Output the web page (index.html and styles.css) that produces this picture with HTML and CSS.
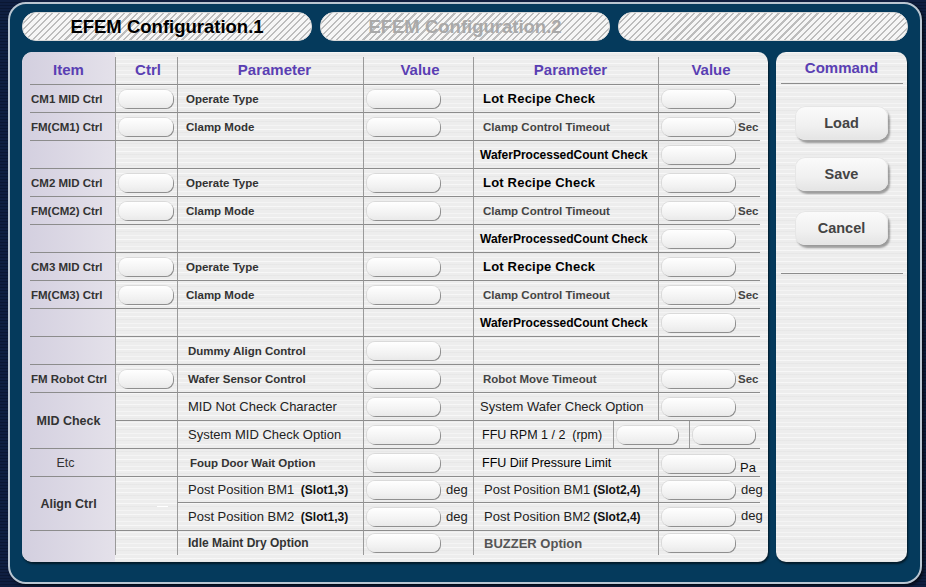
FILE: index.html
```html
<!DOCTYPE html>
<html>
<head>
<meta charset="utf-8">
<title>EFEM Configuration</title>
<link rel="stylesheet" href="styles.css">
</head>
<body>
<div class="frame">
  <div class="tabs">
    <div class="tab active">EFEM Configuration.1</div>
    <div class="tab dim">EFEM Configuration.2</div>
    <div class="tab"></div>
  </div>
  <div class="main">
    <div class="panel tbl">
      <div class="grid">
        <div class="h it ctr">Item</div><div class="h ct">Ctrl</div><div class="h pa">Parameter</div><div class="h va">Value</div><div class="h pb">Parameter</div><div class="h vb">Value</div>

        <div class="it">CM1 MID Ctrl</div><div class="ct"><span class="in s"></span></div><div class="pa b">Operate Type</div><div class="va"><span class="in"></span></div><div class="pb lrc">Lot Recipe Check</div><div class="vb"><span class="in"></span></div>
        <div class="it">FM(CM1) Ctrl</div><div class="ct"><span class="in s"></span></div><div class="pa b">Clamp Mode</div><div class="va"><span class="in"></span></div><div class="pb b g">Clamp Control Timeout</div><div class="vb"><span class="in"></span><span class="unit">Sec</span></div>
        <div class="it"></div><div class="ct"></div><div class="pa"></div><div class="va"></div><div class="pb wpc">WaferProcessedCount Check</div><div class="vb"><span class="in"></span></div>

        <div class="it">CM2 MID Ctrl</div><div class="ct"><span class="in s"></span></div><div class="pa b">Operate Type</div><div class="va"><span class="in"></span></div><div class="pb lrc">Lot Recipe Check</div><div class="vb"><span class="in"></span></div>
        <div class="it">FM(CM2) Ctrl</div><div class="ct"><span class="in s"></span></div><div class="pa b">Clamp Mode</div><div class="va"><span class="in"></span></div><div class="pb b g">Clamp Control Timeout</div><div class="vb"><span class="in"></span><span class="unit">Sec</span></div>
        <div class="it"></div><div class="ct"></div><div class="pa"></div><div class="va"></div><div class="pb wpc">WaferProcessedCount Check</div><div class="vb"><span class="in"></span></div>

        <div class="it">CM3 MID Ctrl</div><div class="ct"><span class="in s"></span></div><div class="pa b">Operate Type</div><div class="va"><span class="in"></span></div><div class="pb lrc">Lot Recipe Check</div><div class="vb"><span class="in"></span></div>
        <div class="it">FM(CM3) Ctrl</div><div class="ct"><span class="in s"></span></div><div class="pa b">Clamp Mode</div><div class="va"><span class="in"></span></div><div class="pb b g">Clamp Control Timeout</div><div class="vb"><span class="in"></span><span class="unit">Sec</span></div>
        <div class="it"></div><div class="ct"></div><div class="pa"></div><div class="va"></div><div class="pb wpc">WaferProcessedCount Check</div><div class="vb"><span class="in"></span></div>

        <div class="it"></div><div class="ct"></div><div class="pa b x">Dummy Align Control</div><div class="va"><span class="in"></span></div><div class="pb"></div><div class="vb"></div>
        <div class="it">FM Robot Ctrl</div><div class="ct"><span class="in s"></span></div><div class="pa b x">Wafer Sensor Control</div><div class="va"><span class="in"></span></div><div class="pb b g">Robot Move Timeout</div><div class="vb"><span class="in"></span><span class="unit">Sec</span></div>

        <div class="it ctr b2 span2">MID Check</div><div class="ct"></div><div class="pa r x">MID Not Check Character</div><div class="va"><span class="in"></span></div><div class="pb r wl">System Wafer Check Option</div><div class="vb"><span class="in"></span></div>
        <div class="ct"></div><div class="pa r x">System MID Check Option</div><div class="va"><span class="in"></span></div>
        <div class="pb2"><div class="ffu">FFU RPM 1 / 2&nbsp; (rpm)</div><div class="ffi"><span class="in m"></span></div><div class="ffi"><span class="in m2"></span></div></div>

        <div class="it ctr etc">Etc</div><div class="ct"></div><div class="pa b xx">Foup Door Wait Option</div><div class="va"><span class="in"></span></div><div class="pb r k">FFU Diif Pressure Limit</div><div class="vb low"><span class="in"></span><span class="unit pa-u">Pa</span></div>

        <div class="it ctr b2 span2">Align Ctrl</div><div class="ct span2 dashc"><span class="dash"></span></div><div class="pa r x">Post Position BM1&nbsp; <b class="slot">(Slot1,3)</b></div><div class="va"><span class="in"></span><span class="unit n">deg</span></div><div class="pb r x2">Post Position BM1 <b class="slot">(Slot2,4)</b></div><div class="vb"><span class="in"></span><span class="unit n up">deg</span></div>
        <div class="pa r x">Post Position BM2&nbsp; <b class="slot">(Slot1,3)</b></div><div class="va"><span class="in"></span><span class="unit n">deg</span></div><div class="pb r x2">Post Position BM2 <b class="slot">(Slot2,4)</b></div><div class="vb"><span class="in"></span><span class="unit n up">deg</span></div>

        <div class="it last"></div><div class="ct last"></div><div class="pa b12 x last">Idle Maint Dry Option</div><div class="va last"><span class="in"></span></div><div class="pb bz x2 last">BUZZER Option</div><div class="vb last"><span class="in"></span></div>
      </div>
    </div>
    <div class="panel cmd">
      <div class="cmd-h">Command</div>
      <div class="btns">
        <div class="btn">Load</div>
        <div class="btn">Save</div>
        <div class="btn">Cancel</div>
      </div>
      <div class="cmd-line"></div>
    </div>
  </div>
</div>
</body>
</html>
```
FILE: styles.css
```css
* { box-sizing: border-box; }
html, body { margin: 0; padding: 0; }
body {
  width: 926px;
  height: 587px;
  overflow: hidden;
  font-family: "Liberation Sans", Arial, sans-serif;
  background-color: #0d1c3c;
  background-image: repeating-linear-gradient(180deg, #0f1f41 0 2px, #0a1733 2px 3px);
}
.frame {
  margin: 2px 0 0 8px;
  width: 914px;
  height: 582px;
  border: 2px solid #b9c6d2;
  border-radius: 18px;
  background: #053a5c;
  padding: 8px 12px 0 12px;
  box-shadow: 2px 2px 3px rgba(0,0,0,0.6);
}
.tabs {
  display: flex;
  gap: 8px;
  height: 29px;
}
.tab {
  flex: 1;
  border-radius: 14px;
  border: 1px solid #d8d8d8;
  background-color: #f0f0f0;
  background-image: repeating-linear-gradient(135deg, #f6f6f6 0 2px, #bdbdbd 2px 3.5px, #f6f6f6 3.5px 4.6px);
  display: flex;
  align-items: center;
  justify-content: center;
  font-weight: bold;
  font-size: 18.5px;
  color: #000;
}
.tab.dim { color: #a9a9a9; }
.main {
  display: flex;
  gap: 8px;
  margin-top: 11px;
  height: 510px;
}
.panel {
  border-radius: 10px;
  background-color: #ededed;
  background-image:
    repeating-linear-gradient(180deg, rgba(255,255,255,0.55) 0 1px, transparent 1px 3px, rgba(0,0,0,0.025) 3px 4px, transparent 4px 7px, rgba(255,255,255,0.4) 7px 8px, transparent 8px 11px);
  box-shadow: 1px 2px 2px rgba(0,0,0,0.55);
}
.tbl {
  width: 746px;
  position: relative;
  overflow: hidden;
}
.tbl::before {
  content: "";
  position: absolute;
  left: 0; top: 0; bottom: 0;
  width: 93px;
  background: linear-gradient(90deg, #d3cfdf, #e4e1ea);
  border-radius: 10px 0 0 10px;
}
.grid {
  position: relative;
  margin: 5px 0 0 8px;
  display: grid;
  grid-template-columns: 85px 62px 186px 110px 185px 102px;
  grid-template-rows: 28px repeat(14, 28px) 26px 28px 24px;
}
.grid > div {
  display: flex;
  align-items: center;
  border-bottom: 1px solid #8c8c8c;
  white-space: nowrap;
  color: #333;
  font-size: 11.5px;
  font-weight: bold;
}
.grid > div.last { border-bottom: none; }
.ct, .pa, .va, .pb, .vb, .pb2 { border-left: 1px solid #9a9a9a; }
.h {
  justify-content: center;
  color: #5a3fb3 !important;
  font-size: 15px !important;
  padding-bottom: 3px;
}
.it { padding-left: 1px; }
.it.ctr { justify-content: center; padding-left: 0; padding-right: 8px; }
.span2 { grid-row: span 2; }
.b2 { font-size: 12.5px !important; }
.etc { font-weight: normal !important; font-size: 12.5px !important; padding-right: 14px !important; }
.ct { padding-left: 3px; }
.pa { padding-left: 8px; }
.pa.x { padding-left: 10px; }
.pa.xx { padding-left: 12px; }
.va { padding-left: 3px; }
.pb { padding-left: 9px; }
.pb.x2 { padding-left: 10px; }
.vb { padding-left: 3px; }
.g { color: #444 !important; }
.r { font-weight: normal !important; font-size: 13px !important; color: #222 !important; }
.pb.wl { padding-left: 6px; }
.pb.k { padding-left: 8px; color: #000 !important; font-size: 12.5px !important; }
.lrc { font-size: 13px !important; color: #000 !important; letter-spacing: 0.2px; }
.wpc { font-size: 12px !important; color: #000 !important; padding-left: 6px; }
.b12 { font-size: 12px !important; }
.bz { font-size: 13px !important; color: #555 !important; }
.slot { font-size: 12px; color: #111; font-weight: bold; margin-left: 3px; }
.in {
  display: inline-block;
  width: 73px;
  height: 18px;
  border-radius: 8px;
  background: linear-gradient(180deg, #ffffff, #f1f1f1 70%, #e9e9e9);
  box-shadow: 1px 1px 0 #8f8f8f, 0 0 0 1px #dadada;
  flex: none;
}
.in.s { width: 54px; }
.in.m { width: 61px; }
.in.m2 { width: 62px; }
.unit { font-size: 11.5px; color: #444; margin-left: 3px; font-weight: bold; }
.unit.n { font-weight: normal; font-size: 13px; color: #222; margin-left: 6px; }
.unit.up { align-self: flex-start; margin-top: 5px; }
.vb.low { align-items: flex-end; padding-bottom: 3px; }
.pa-u { font-weight: normal; font-size: 13px; color: #111; margin-left: 5px; margin-bottom: -2px; }
.pb2 {
  grid-column: span 2;
  display: flex;
  align-items: stretch !important;
}
.ffu {
  width: 139px;
  padding-left: 8px;
  display: flex;
  align-items: center;
  font-weight: normal;
  font-size: 12.5px;
  color: #111;
}
.ffi {
  display: flex;
  align-items: center;
  border-left: 1px solid #9a9a9a;
  padding-left: 3px;
}
.ffu + .ffi { width: 76px; }
.ffi + .ffi { flex: 1; }
.dashc { justify-content: flex-end; padding-right: 9px; padding-top: 6px; }
.dash { width: 11px; height: 1px; background: #fff; }
.cmd {
  width: 131px;
  display: flex;
  flex-direction: column;
  align-items: center;
}
.cmd-h {
  width: 122px;
  height: 32px;
  border-bottom: 1px solid #8c8c8c;
  display: flex;
  align-items: center;
  justify-content: center;
  color: #5a3fb3;
  font-weight: bold;
  font-size: 15px;
}
.btns {
  display: flex;
  flex-direction: column;
  gap: 17px;
  margin-top: 22px;
}
.btn {
  width: 93px;
  height: 34px;
  border-radius: 10px;
  background: linear-gradient(180deg, #fbfbfb, #f0f0f0 60%, #e4e4e4);
  box-shadow: 2px 3px 2px rgba(0,0,0,0.35), inset 0 0 0 1px #e6e6e6;
  display: flex;
  align-items: center;
  justify-content: center;
  font-weight: bold;
  font-size: 14.5px;
  color: #444;
}
.btn:last-child { margin-top: 3px; }
.cmd-line {
  width: 122px;
  margin-top: 28px;
  border-bottom: 1px solid #8c8c8c;
}
```
